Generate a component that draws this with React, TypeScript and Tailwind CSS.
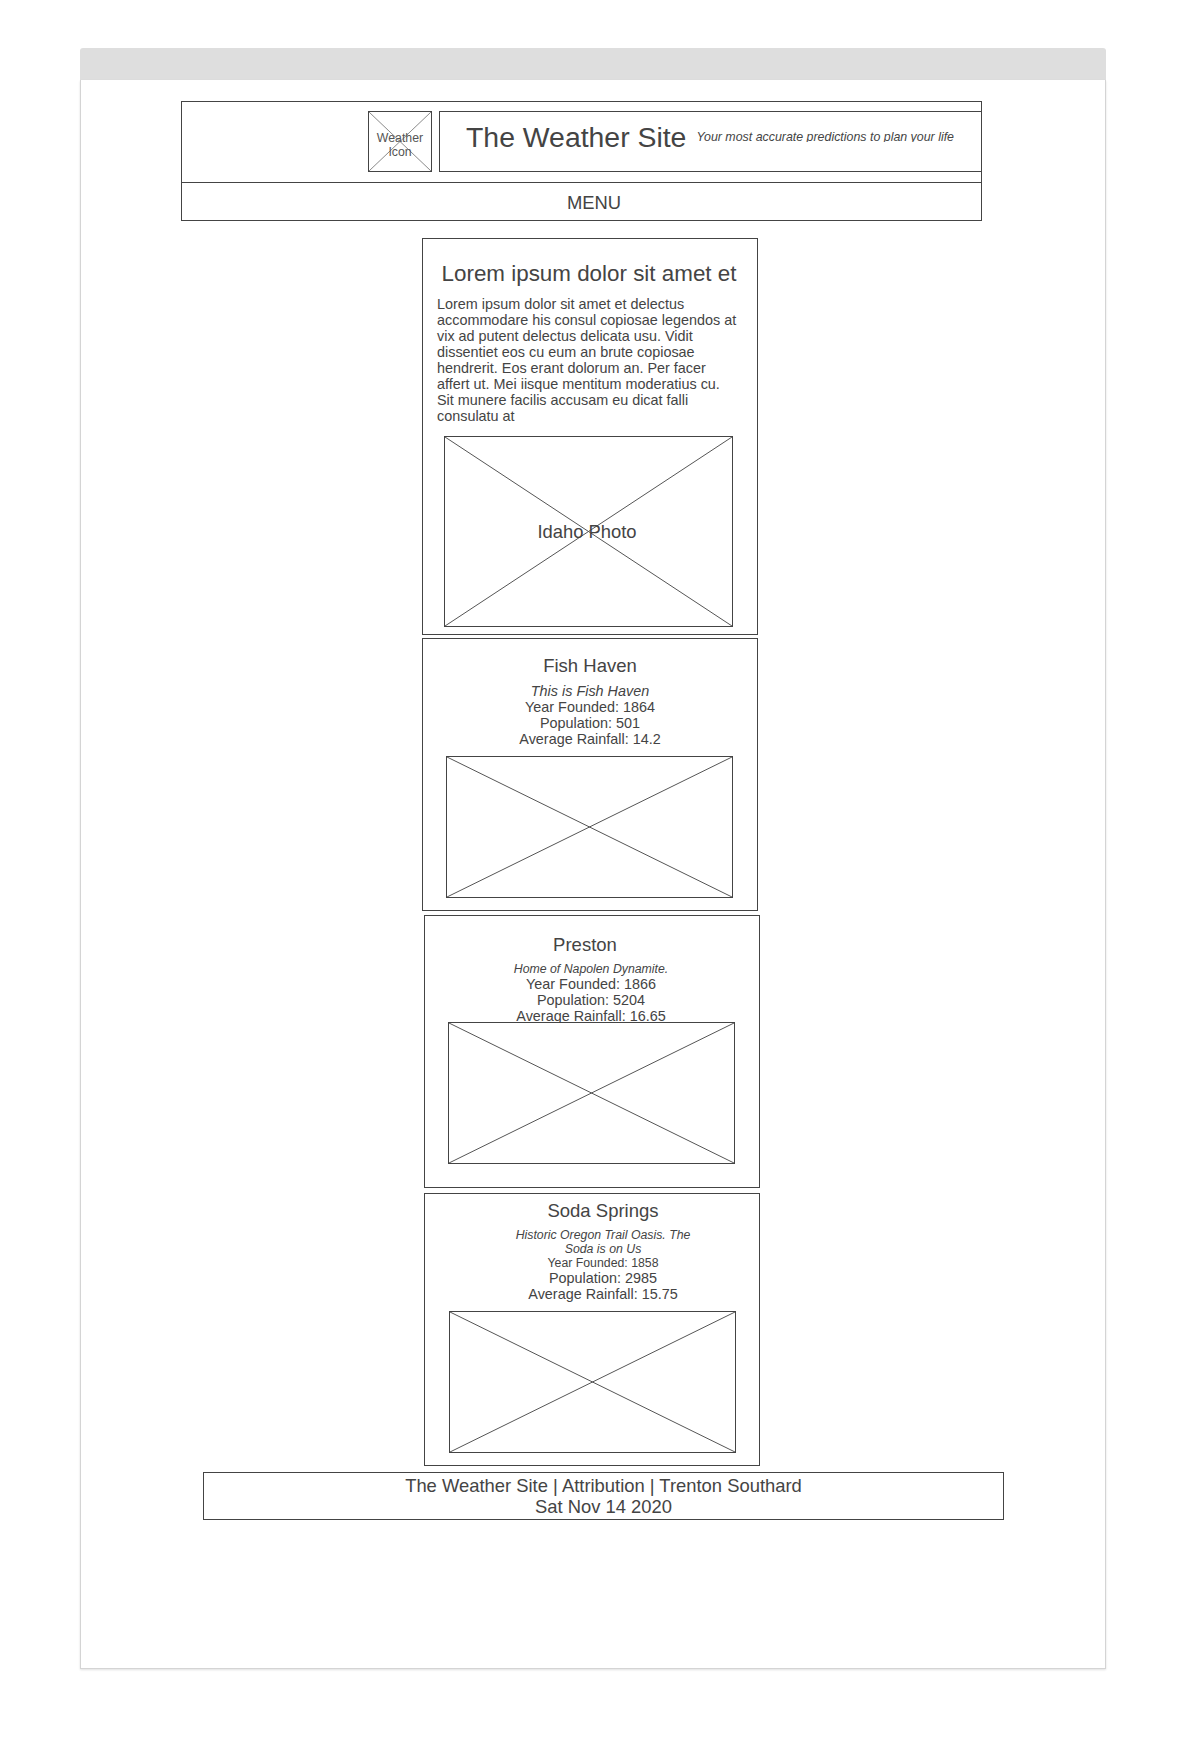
import React from "react";

function Cross({ stroke = "#555" }: { stroke?: string }) {
  return (
    <svg
      className="absolute inset-0 h-full w-full"
      viewBox="0 0 100 100"
      preserveAspectRatio="none"
      aria-hidden="true"
    >
      <line x1="0" y1="0" x2="100" y2="100" stroke={stroke} strokeWidth="1" vectorEffect="non-scaling-stroke" />
      <line x1="100" y1="0" x2="0" y2="100" stroke={stroke} strokeWidth="1" vectorEffect="non-scaling-stroke" />
    </svg>
  );
}

function ImgBox({ className, children }: { className: string; children?: React.ReactNode }) {
  return (
    <div className={"relative border border-[#444] bg-white " + className}>
      <Cross />
      {children}
    </div>
  );
}

const loremLines = [
  "Lorem ipsum dolor sit amet et delectus",
  "accommodare his consul copiosae legendos at",
  "vix ad putent delectus delicata usu. Vidit",
  "dissentiet eos cu eum an brute copiosae",
  "hendrerit. Eos erant dolorum an. Per facer",
  "affert ut. Mei iisque mentitum moderatius cu.",
  "Sit munere facilis accusam eu dicat falli",
  "consulatu at",
];

export default function App() {
  return (
    <div className="min-h-[1747px] w-full bg-white font-['Liberation_Sans',Arial,sans-serif] text-[#444]">
      <div className="ml-[80px] w-[1026px] pt-[48px]">
        <div className="h-[32px] rounded-t-[3px] bg-[#dedede]" />
        <div className="flex h-[1589px] flex-col items-start border-x border-b border-[#d4d4d4] bg-white shadow-[0_1px_2px_rgba(0,0,0,0.12)]">
          {/* Header */}
          <header className="ml-[100px] mt-[21px] w-[801px] border border-[#444]">
            <div className="flex h-[80px] items-start pt-[9px]">
              <div className="relative ml-[186px] h-[61px] w-[64px] border border-[#444]">
                <Cross stroke="#8a8a8a" />
                <div className="relative pt-[20px] text-center text-[12.3px] leading-[13.5px] text-[#555]">
                  <div>Weather</div>
                  <div>Icon</div>
                </div>
              </div>
              <div className="ml-[7px] flex h-[61px] flex-1 items-start border-y border-l border-[#444] pl-[26px]">
                <h1 className="mt-[9px] whitespace-nowrap text-[28.4px] leading-[32px]">The Weather Site</h1>
                <div className="ml-[10px] mt-[17.5px] h-[12px] overflow-hidden whitespace-nowrap text-[12.4px] italic leading-[14px]">
                  Your most accurate predictions to plan your life
                </div>
              </div>
            </div>
            <nav className="h-[38px] border-t border-[#444] pl-[25px] pt-[1px] text-center text-[18.4px] leading-[37px]">
              MENU
            </nav>
          </header>

          {/* Card 1 */}
          <section className="ml-[341px] mt-[17px] h-[397px] w-[336px] border border-[#444]">
            <h2 className="mt-[22px] pr-[2px] text-center text-[22.4px] leading-[26px]">Lorem ipsum dolor sit amet et</h2>
            <div className="mt-[9px] pl-[14px] text-[14.4px] leading-[16px]">
              {loremLines.map((l) => (
                <div key={l} className="whitespace-nowrap">{l}</div>
              ))}
            </div>
            <ImgBox className="ml-[21px] mt-[12px] h-[191px] w-[289px]">
              <div className="relative flex h-full items-center justify-center pr-[3px] pt-[1px] text-[18.4px]">Idaho Photo</div>
            </ImgBox>
          </section>

          {/* Card 2 */}
          <section className="ml-[341px] mt-[3px] h-[273px] w-[336px] border border-[#444]">
            <h3 className="mt-[16px] text-center text-[18.5px] leading-[22px]">Fish Haven</h3>
            <div className="mt-[6px] text-center text-[14.4px] leading-[16px]">
              <div className="italic">This is Fish Haven</div>
              <div>Year Founded: 1864</div>
              <div>Population: 501</div>
              <div>Average Rainfall: 14.2</div>
            </div>
            <ImgBox className="ml-[23px] mt-[9px] h-[142px] w-[287px]" />
          </section>

          {/* Card 3 */}
          <section className="ml-[343px] mt-[4px] h-[273px] w-[336px] border border-[#444]">
            <h3 className="mt-[18px] pr-[14px] text-center text-[18.5px] leading-[22px]">Preston</h3>
            <div className="mt-[6px] pr-[2px] text-center">
              <div className="text-[12.3px] italic leading-[14px]">Home of Napolen Dynamite.</div>
              <div className="text-[14.4px] leading-[16px]">Year Founded: 1866</div>
              <div className="text-[14.4px] leading-[16px]">Population: 5204</div>
              <div className="text-[14.4px] leading-[16px]">Average Rainfall: 16.65</div>
            </div>
            <ImgBox className="ml-[23px] mt-[-2px] h-[142px] w-[287px]" />
          </section>

          {/* Card 4 */}
          <section className="ml-[343px] mt-[5px] h-[273px] w-[336px] border border-[#444]">
            <div className="pl-[22px]">
              <div className="mx-auto w-[190px] text-center">
                <h3 className="mt-[6px] whitespace-nowrap text-[18.5px] leading-[22px]">Soda Springs</h3>
                <div className="mt-[7px] whitespace-nowrap text-[12.3px] italic leading-[13.5px]">
                  <div>Historic Oregon Trail Oasis. The</div>
                  <div>Soda is on Us</div>
                </div>
                <div className="text-[12.3px] leading-[14px]">Year Founded: 1858</div>
                <div className="whitespace-nowrap text-[14.4px] leading-[16px]">Population: 2985</div>
                <div className="whitespace-nowrap text-[14.4px] leading-[16px]">Average Rainfall: 15.75</div>
              </div>
            </div>
            <ImgBox className="ml-[24px] mt-[9px] h-[142px] w-[287px]" />
          </section>

          {/* Footer */}
          <footer className="ml-[122px] mt-[6px] h-[48px] w-[801px] border border-[#444] pt-[2px] text-center text-[18.4px] leading-[21px]">
            <div>The Weather Site | Attribution | Trenton Southard</div>
            <div>Sat Nov 14 2020</div>
          </footer>
        </div>
      </div>
    </div>
  );
}
